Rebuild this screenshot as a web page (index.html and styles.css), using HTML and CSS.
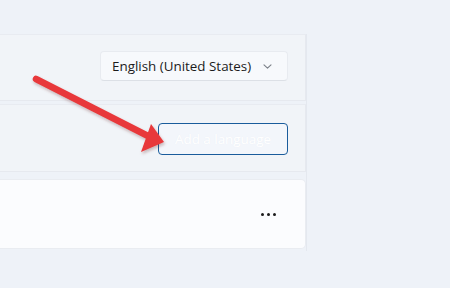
FILE: index.html
```html
<!DOCTYPE html>
<html>
<head>
<meta charset="utf-8">
<link rel="stylesheet" href="styles.css">
</head>
<body>
<div class="page">
  <div class="column">
    <div class="panel p1">
      <div class="dropdown">
        <span class="dd-text">English (United States)</span>
        <svg class="chev" width="9" height="5" viewBox="0 0 9 5"><path d="M1 0.8 L4.5 4.2 L8 0.8" fill="none" stroke="#7b8088" stroke-width="1.1" stroke-linecap="round" stroke-linejoin="round"/></svg>
      </div>
    </div>
    <div class="panel p2">
      <button class="add-btn">Add a language</button>
    </div>
    <div class="panel p3">
      <span class="more"><i></i><i></i><i></i></span>
    </div>
  </div>
  <svg class="arrow" width="450" height="288" viewBox="0 0 450 288">
    <defs>
      <filter id="sh" x="-20%" y="-20%" width="140%" height="140%">
        <feDropShadow dx="1" dy="2" stdDeviation="1.5" flood-color="#5a2020" flood-opacity="0.3"/>
      </filter>
    </defs>
    <g filter="url(#sh)">
      <line x1="36" y1="79" x2="150" y2="137" stroke="#e8383a" stroke-width="6.5" stroke-linecap="round"/>
      <polygon points="164,142 151,124 141,152" fill="#e8383a"/>
    </g>
  </svg>
</div>
</body>
</html>
```
FILE: styles.css
```css
html, body {
  margin: 0;
  padding: 0;
}
body {
  background: #eef2f8;
  font-family: "Open Sans", "Noto Sans", sans-serif;
  width: 450px;
  height: 288px;
  overflow: hidden;
}
.page {
  position: relative;
  width: 450px;
  height: 288px;
  padding-top: 34px;
  box-sizing: border-box;
}
.column {
  width: 306px;
  display: flex;
  flex-direction: column;
  border-right: 1px solid #e4e8ef;
  padding-bottom: 2px;
}
.panel {
  display: flex;
  align-items: center;
  justify-content: flex-end;
  box-sizing: border-box;
  padding-right: 17px;
}
.p1 {
  height: 67px;
  background: #f1f4f8;
  border-top: 1px solid #e8ebf1;
  border-bottom: 1px solid #e6e9ef;
  border-right: 1px solid #e6e9ef;
}
.p2 {
  height: 68px;
  margin-top: 3px;
  background: #f1f4f8;
  border-top: 1px solid #e8ebf1;
  border-bottom: 1px solid #e6e9ef;
  border-right: 1px solid #e6e9ef;
}
.p3 {
  height: 70px;
  margin-top: 7px;
  background: #fbfcfe;
  border: 1px solid #e9ecf1;
  border-left: none;
  border-radius: 0 5px 5px 0;
  padding-right: 29px;
}
.dropdown {
  width: 188px;
  height: 30px;
  box-sizing: border-box;
  background: #f7f9fc;
  border: 1px solid #e8ebf0;
  border-bottom-color: #dce0e6;
  border-radius: 4px;
  display: flex;
  align-items: center;
  padding-left: 11px;
  padding-right: 15px;
  justify-content: space-between;
  margin-top: -3px;
}
.dd-text {
  font-size: 13.4px;
  color: #1b1b1b;
  white-space: nowrap;
}
.chev {
  display: block;
}
.add-btn {
  width: 130px;
  height: 32px;
  box-sizing: border-box;
  background: #f3f6fb;
  border: 1px solid #1a5c9c;
  border-radius: 4px;
  color: #ffffff;
  font-family: "Open Sans", "Noto Sans", sans-serif;
  font-size: 13.4px;
  padding: 0;
  margin-top: 2px;
  text-shadow: 0 0 1px #e8edf4;
}
.more {
  display: flex;
  gap: 3px;
}
.more i {
  display: block;
  width: 3px;
  height: 3px;
  border-radius: 50%;
  background: #1b1b1b;
}
.arrow {
  position: absolute;
  left: 0;
  top: 0;
  pointer-events: none;
}
```
